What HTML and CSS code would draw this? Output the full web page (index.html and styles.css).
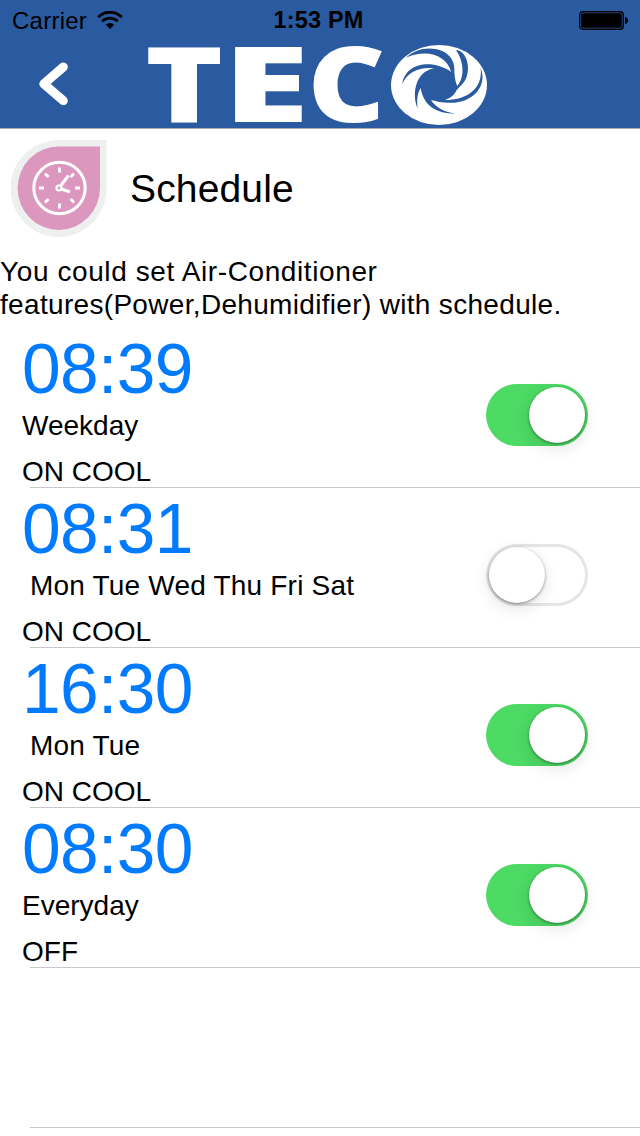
FILE: index.html
```html
<!DOCTYPE html>
<html lang="en">
<head>
    <meta charset="UTF-8">
    <meta name="viewport" content="width=device-width, initial-scale=1.0">
    <title>Schedule</title>
    <link rel="stylesheet" href="styles.css">
</head>
<body>
    <!-- Header -->
    <header class="header">
        <div class="status-bar">
            <div class="status-left">
                <span class="carrier">Carrier</span>
                <svg class="wifi" width="26" height="19" viewBox="0 0 26 19">
                    <path d="M1.3 6.2 A16.5 16.5 0 0 1 24.7 6.2" fill="none" stroke="#000" stroke-width="3"/>
                    <path d="M5.2 10.3 A11 11 0 0 1 20.8 10.3" fill="none" stroke="#000" stroke-width="2.8"/>
                    <path d="M8.8 13.8 A6 6 0 0 1 17.2 13.8 L13 18 Z"/>
                </svg>
            </div>
            <span class="clock">1:53 PM</span>
            <div class="status-right">
                <svg width="50" height="20" viewBox="0 0 50 20">
                    <rect x="0.75" y="0.75" width="43.5" height="17.5" rx="3" fill="none" stroke="#000" stroke-width="1.3"/>
                    <rect x="2.2" y="2.2" width="40.6" height="14.6" rx="1.5"/>
                    <path d="M46 6 Q49 6.5 49 9.5 Q49 12.5 46 13 Z"/>
                </svg>
            </div>
        </div>
        <div class="nav-bar">
            <button class="back-btn" title="Back">
                <svg width="32" height="46" viewBox="0 0 32 46">
                    <path d="M25.3 6 L5.8 22.8 L25.3 39.7" fill="none" stroke="#fff" stroke-width="9" stroke-linecap="round" stroke-linejoin="round"/>
                </svg>
            </button>
            <svg class="logo" width="344" height="86" viewBox="0 0 344 86">
                <g class="logo-text">
                    <text x="0" y="80" textLength="78.3" lengthAdjust="spacingAndGlyphs">T</text>
                    <text x="78" y="80" textLength="86.2" lengthAdjust="spacingAndGlyphs">E</text>
                    <text x="162.5" y="80" textLength="78" lengthAdjust="spacingAndGlyphs">C</text>
                </g>
                <ellipse cx="294" cy="43" rx="48" ry="40" fill="#fff"/>
                <!-- turbine blades -->
                <path transform="translate(175 -42) scale(0.3333)" fill="#2a5aa0" d="M258 173
                    C290 143 330 140 365 152 C395 165 405 190 403 215 C404 235 408 250 412 258
                    C432 235 435 190 408 150 C425 150 444 170 444 205 C443 240 430 250 410 270
                    C404 285 392 293 376 300 C435 300 490 270 482 203
                    C505 260 455 312 385 308 C365 308 350 305 333 300
                    C350 325 370 334 405 341 C350 340 312 320 302 264
                    C292 280 290 300 293 325 C275 285 285 215 342 205
                    C300 200 262 215 247 252 C255 190 335 175 394 216
                    C380 165 320 145 258 173 Z"/>
            </svg>
        </div>
    </header>

    <!-- Page title -->
    <div class="title-bar">
        <svg class="title-icon" width="96" height="98" viewBox="0 0 96 98">
            <path d="M48 0 H95.5 V48 A48 48.5 0 1 1 48 0 Z" fill="#edf0ef"/>
            <path d="M48 6.5 H89 V48 A41.2 41.7 0 1 1 48 6.5 Z" fill="#dc97bf"/>
            <g fill="none" stroke="#fff">
                <circle cx="48.5" cy="48" r="25.7" stroke-width="3"/>
                <path d="M48.5 27.5 V32.5 M48.5 63.5 V68.5 M28 48 H33 M64 48 H69 M34 33.5 L37.5 37 M63 33.5 L59.5 37 M34 62.5 L37.5 59 M63 62.5 L59.5 59" stroke-width="2.8"/>
                <circle cx="48" cy="48" r="2.5" stroke-width="2.2"/>
                <path d="M49.5 46 L57.5 35.5 M50.5 49 L59 52" stroke-width="3"/>
            </g>
        </svg>
        <h1>Schedule</h1>
    </div>
    <p class="intro"><span class="intro-first">You could set Air-Conditioner</span><br>features(Power,Dehumidifier) with schedule.</p>

    <!-- Schedule list -->
    <ul class="schedule-list">
        <li class="schedule">
            <div class="schedule-info">
                <div class="time">08:39</div>
                <div class="days">Weekday</div>
                <div class="mode">ON COOL</div>
            </div>
            <div class="switch on"><div class="knob"></div></div>
        </li>
        <li class="schedule">
            <div class="schedule-info">
                <div class="time">08:31</div>
                <div class="days custom">Mon Tue Wed Thu Fri Sat</div>
                <div class="mode">ON COOL</div>
            </div>
            <div class="switch"><div class="knob"></div></div>
        </li>
        <li class="schedule">
            <div class="schedule-info">
                <div class="time">16:30</div>
                <div class="days custom">Mon Tue</div>
                <div class="mode">ON COOL</div>
            </div>
            <div class="switch on"><div class="knob"></div></div>
        </li>
        <li class="schedule">
            <div class="schedule-info">
                <div class="time">08:30</div>
                <div class="days">Everyday</div>
                <div class="mode">OFF</div>
            </div>
            <div class="switch on"><div class="knob"></div></div>
        </li>
        <li class="schedule"></li>
    </ul>
</body>
</html>
```

FILE: styles.css
```css
* { box-sizing: border-box; }
body {
    font-family: "Liberation Sans", Arial, sans-serif;
    margin: 0; padding: 0;
    background: #fff; color: #000;
    height: 1136px; overflow: hidden;
}
/* Header */
.header { height: 129px; background: #2a5aa0; border-bottom: 1px solid #a5abb3; }
.status-bar {
    display: grid; grid-template-columns: 1fr auto 1fr; align-items: center;
    height: 41px; padding: 0 11px 0 12px;
    font-size: 24px;
}
.status-left { display: flex; align-items: center; gap: 10px; }
.carrier { letter-spacing: 0.25px; }
.clock { margin-right: 4px; font-weight: bold; font-size: 23.5px; letter-spacing: 0.2px; }
.status-right { display: flex; justify-content: flex-end; }
.nav-bar { display: flex; align-items: flex-start; height: 87px; padding-top: 1px; }
.back-btn {
    display: flex; margin: 19px 0 0 38px; padding: 0;
    background: none; border: none; cursor: pointer;
}
.logo { margin-left: 75px; overflow: visible; }
.logo-text { font-family: "Open Sans", sans-serif; font-weight: 800; font-size: 104px; fill: #fff; }
/* Page title */
.title-bar { display: flex; align-items: center; height: 119px; padding: 0 0 0 11px; }
h1 { margin: 0 0 0 23px; font-size: 39px; font-weight: normal; letter-spacing: 0.15px; }
.intro { margin: 7px 0 0; font-size: 28px; line-height: 33px; height: 73px; white-space: nowrap; letter-spacing: 0.32px; }
.intro-first { letter-spacing: 0.6px; }
/* Schedule list */
.schedule-list { list-style: none; margin: 0; padding: 0; }
.schedule {
    display: flex; justify-content: space-between; align-items: center;
    height: 160px; padding: 0 52px 0 22px;
    background: linear-gradient(#c8c7cc, #c8c7cc) 30px 100% / 100% 1px no-repeat;
}
.schedule-info { display: flex; flex-direction: column; height: 160px; }
.time { height: 82px; line-height: 83px; font-size: 69.5px; letter-spacing: -0.65px; color: #007aff; }
.days { height: 32px; line-height: 32px; font-size: 28px; }
.days.custom { padding-left: 8px; letter-spacing: 0.2px; }
.mode { margin-top: 14px; line-height: 32px; font-size: 28px; }
/* Switch */
.switch {
    display: flex; align-items: center;
    width: 102px; height: 62px; padding: 0 3px; margin-top: 14px;
    border-radius: 31px;
    box-shadow: inset 0 0 0 3px #e5e5e5;
}
.switch.on { justify-content: flex-end; background: #4cd964; box-shadow: none; }
.knob {
    width: 56px; height: 56px; border-radius: 50%; background: #fff;
    box-shadow: 0 1px 3px rgba(0,0,0,0.4), 0 5px 16px rgba(0,0,0,0.12);
}
```
